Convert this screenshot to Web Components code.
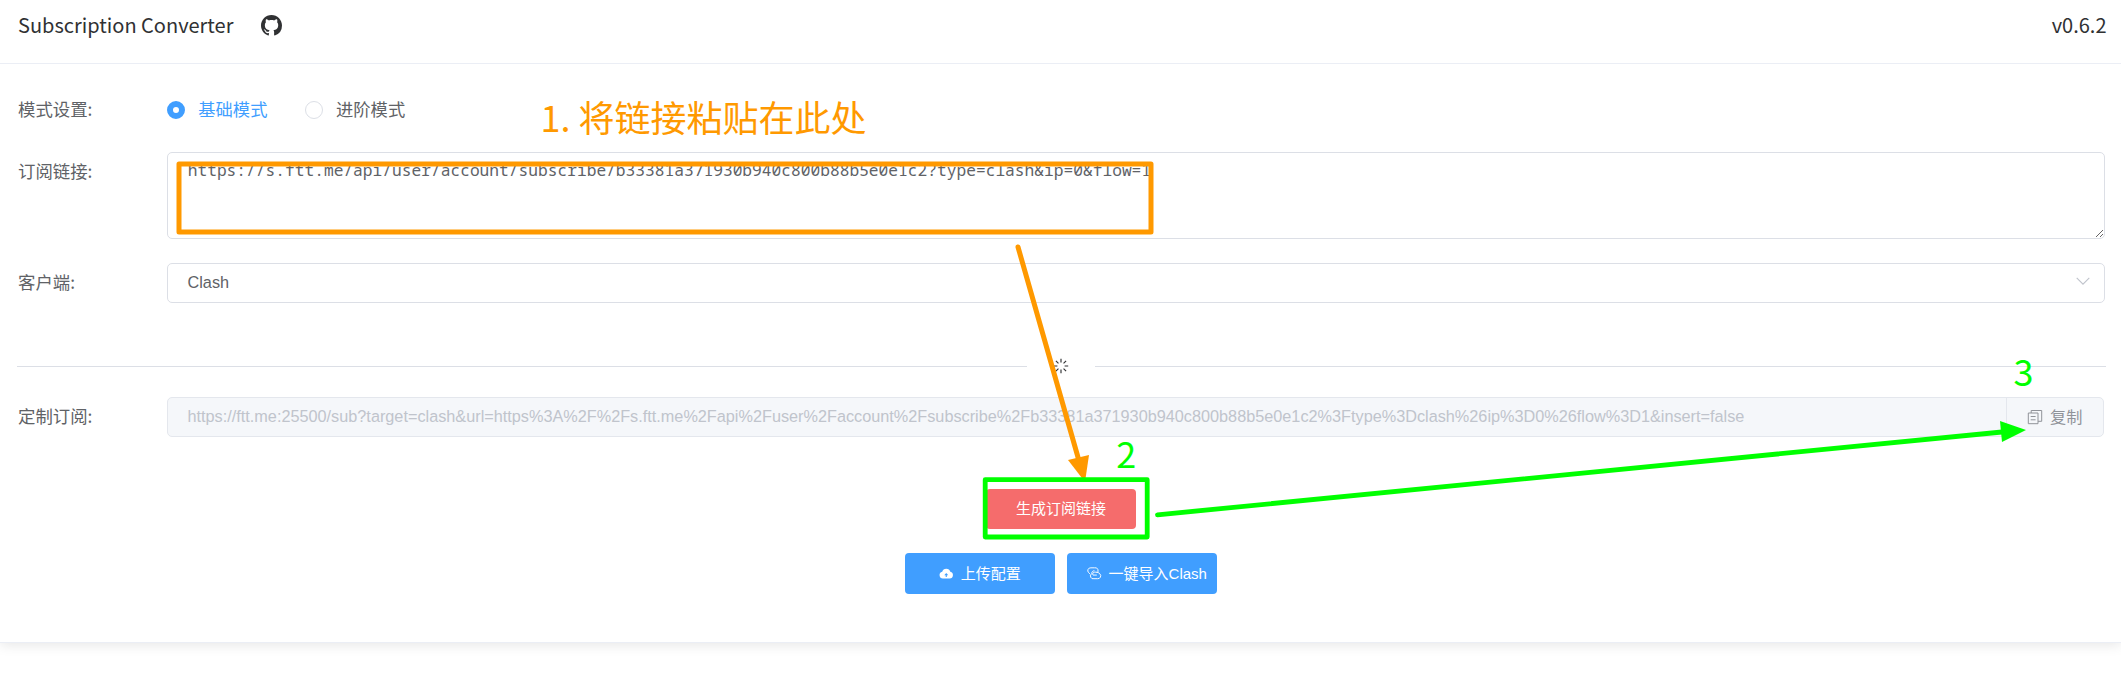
<!DOCTYPE html>
<html lang="zh-CN">
<head>
<meta charset="utf-8">
<title>Subscription Converter</title>
<style>
body{margin:0;background:#fff;font-family:"Noto Sans CJK SC",sans-serif;color:#606266;height:675px;overflow:hidden}
</style>
</head>
<body>
<converter-page></converter-page>
<script>
const define=(name,html,setup)=>customElements.define(name,class extends HTMLElement{
  constructor(){super();this.attachShadow({mode:'open'}).innerHTML=html;}
  connectedCallback(){if(setup)setup(this,this.shadowRoot);}
});

const icons={
  github:'<path fill="currentColor" d="M8 0C3.58 0 0 3.58 0 8c0 3.54 2.29 6.53 5.47 7.59.4.07.55-.17.55-.38 0-.19-.01-.82-.01-1.49-2.01.37-2.53-.49-2.69-.94-.09-.23-.48-.94-.82-1.13-.28-.15-.68-.52-.01-.53.63-.01 1.08.58 1.23.82.72 1.21 1.87.87 2.33.66.07-.52.28-.87.51-1.07-1.78-.2-3.64-.89-3.64-3.95 0-.87.31-1.59.82-2.15-.08-.2-.36-1.02.08-2.12 0 0 .67-.21 2.2.82.64-.18 1.32-.27 2-.27s1.36.09 2 .27c1.53-1.04 2.2-.82 2.2-.82.44 1.1.16 1.92.08 2.12.51.56.82 1.27.82 2.15 0 3.07-1.87 3.75-3.65 3.95.29.25.54.73.54 1.48 0 1.07-.01 1.93-.01 2.2 0 .21.15.46.55.38A8.01 8.01 0 0 0 16 8c0-4.42-3.58-8-8-8z"/>',
  down:'<path d="M1.7 4.8 8 11.1 14.300 4.800" fill="none" stroke="currentColor" stroke-width="1.15"/>',
  loading:'<path d="M8 .8v3.600M8 11.600v3.600M.8 8h3.600M11.600 8h3.600M2.900 2.900l2.550 2.550M10.550 10.550l2.550 2.550M2.900 13.100l2.550-2.550M10.550 5.450l2.550-2.550" stroke="currentColor" stroke-width="1.150" fill="none"/>',
  copy:'<path d="M1.300 4h9.700v10.700H1.300zM4.200 4V1.500h10.500v10.800H11M3.700 7.500h4.900M3.700 10.800h4.900" stroke="currentColor" stroke-width="1" fill="none"/>',
  upload:'<path fill="currentColor" fill-rule="evenodd" d="M4.200 13.700A3.700 3.700 0 0 1 3.500 6.400 4.700 4.700 0 0 1 12.500 6.400 3.700 3.700 0 0 1 11.800 13.700ZM7.400 12V10.200H5.800L8 7.700l2.200 2.500H8.600V12Z"/>',
  link:'<path d="M10.800 7.600A3.100 3.100 0 0 0 8.300 2H4.300a3.100 3.100 0 0 0-2.600 5.200L3.300 8.700M5.200 8.400A3.100 3.100 0 0 0 7.700 14h4a3.100 3.100 0 0 0 2.600-5.200c-1-1.400-2.600-2-4.600-2H8.200a2 2 0 0 0-1.500 3.200h4.100M5.200 8.400c0-2 1.200-3.100 3-3.200" stroke="currentColor" stroke-width="1.050" fill="none"/>'
};
define('ui-icon','<style>:host{display:inline-flex;width:16px;height:16px;flex:none}svg{width:100%;height:100%}</style><svg viewBox="0 0 16 16"></svg>',
  (h,r)=>{r.querySelector('svg').innerHTML=icons[h.getAttribute('name')];});

define('page-header',`<style>
:host{display:flex;box-sizing:border-box;height:64px;border-bottom:1px solid #ebeef5;padding:0 14.500px 12px 18px;align-items:center;color:#303133;font-size:20px;line-height:30px}
ui-icon{width:21px;height:21px;margin-left:28px}
.v{margin-left:auto}
.t,.v{margin-top:-1px}
</style><span class="t"><slot></slot></span><ui-icon name="github"></ui-icon><span class="v"><slot name="version"></slot></span>`);

define('form-row',`<style>
:host{display:grid;grid-template-columns:149px 1fr;align-items:start;padding:0 16px 0 18px}
.l{font-size:17.400px;line-height:38px;height:38px;white-space:nowrap}
</style><div class="l"></div><slot></slot>`,(h,r)=>{r.querySelector('.l').textContent=h.getAttribute('label');});

define('radio-option',`<style>
:host{display:flex;align-items:center;font-size:17.300px;height:40px}
i{box-sizing:border-box;width:18px;height:18px;border-radius:50%;border:1px solid #dcdfe6;margin-right:13px}
span{line-height:38px;height:40px}
:host([checked]){color:#409eff}
:host([checked]) i{border:6.300px solid #409eff;background:#fff}
</style><i></i><span><slot></slot></span>`);
define('radio-group','<style>:host{display:flex;gap:37.600px;padding-left:.3px}</style><slot></slot>');

define('text-area',`<style>
:host{display:block}
textarea{display:block;box-sizing:border-box;width:100%;height:87px;border:1px solid #dcdfe6;border-radius:5px;padding:5px 20px 5px 19.700px;resize:vertical;outline:0;font:16.230px/24px "Noto Sans Mono","DejaVu Sans Mono",monospace;color:#606266;background:#fff;overflow:hidden;white-space:pre}
</style><textarea spellcheck="false"></textarea>`,(h,r)=>{r.querySelector('textarea').value=h.getAttribute('value');});

define('select-box',`<style>
:host{display:flex;box-sizing:border-box;height:40px;border:1px solid #dcdfe6;border-radius:5px;padding:0 13px 2px 19.500px;align-items:center;justify-content:space-between;font:16.250px "Liberation Sans",sans-serif}
ui-icon{color:#c0c4cc;margin-top:-2px}
</style><span><slot></slot></span><ui-icon name="down"></ui-icon>`);

define('section-divider',`<style>
:host{display:flex;align-items:center;margin:0 15.500px 0 17px;height:16px;color:#303133}
i{height:1px;background:#dcdfe6;flex:1}
span{width:68px;display:flex;justify-content:center}
ui-icon{margin-top:-1px}
</style><i></i><span><ui-icon name="loading"></ui-icon></span><i></i>`);

define('copy-input',`<style>
:host{display:flex;box-sizing:border-box;height:40px;border:1px solid #e4e7ed;border-radius:5px;background:#f5f7fa;align-items:stretch;margin-right:1px}
.t{flex:1;padding-left:19.500px;font:16.265px/37px "Liberation Sans",sans-serif;color:#c0c4cc;white-space:nowrap}
.b{box-sizing:border-box;width:97.500px;border-left:1px solid #e4e7ed;display:flex;align-items:center;padding-left:20.500px;gap:7px;color:#909399;font-size:16.200px}
.b span{line-height:20px;margin-top:-2px}
.b ui-icon{margin-top:-1px}
</style><div class="t"><slot></slot></div><div class="b"><ui-icon name="copy"></ui-icon><span><slot name="action"></slot></span></div>`);

define('ui-button',`<style>
:host{display:flex;box-sizing:border-box;width:150px;height:41px;border-radius:4px;background:#409eff;color:#fff;align-items:center;justify-content:center;gap:7px;white-space:nowrap;font:15px/20px "Liberation Sans","Noto Sans CJK SC",sans-serif;padding-left:1px}
:host([kind=danger]){background:#f56c6c;height:40px}
:host([wide]){padding-left:11px}
::slotted(ui-icon){width:14.500px;height:14.500px}
</style><slot name="icon"></slot><span><slot></slot></span>`);
define('button-row','<style>:host{display:flex;justify-content:center;gap:12px}</style><slot></slot>');

define('annotation-layer',`<style>
:host{position:absolute;left:0;top:0;pointer-events:none}
svg{display:block}
text{font:36px "Noto Sans CJK SC",sans-serif}
</style><svg width="2121" height="675" viewBox="0 0 2121 675" fill="none">
<g stroke="#f90" stroke-linejoin="round" stroke-linecap="round"><rect x="179" y="164" width="972" height="68" stroke-width="5"/><path d="M1018 247 1078.500 459" stroke-width="5"/></g>
<path d="M1068 460 1089 455 1085 482Z" fill="#f90"/>
<g stroke="#0f0" stroke-linejoin="round" stroke-linecap="round" stroke-width="4.800"><rect x="985.200" y="479.700" width="162" height="57.300"/><path d="M1157.500 514.800 2002 432"/></g>
<path d="M2000 421 2026 430 2002 442Z" fill="#0f0"/>
<text x="540.500" y="132" fill="#f90">1. 将链接粘贴在此处</text>
<text x="1116.300" y="468" fill="#0f0">2</text><text x="2013.500" y="386" fill="#0f0">3</text>
</svg>`);

define('converter-page',`<style>
:host{display:block;position:relative}
main{display:flex;flex-direction:column;box-sizing:border-box;height:643px;background:#fff;box-shadow:0 2px 12px rgba(0,0,0,.1);border-bottom:1px solid #ebeef5}
.mode{margin-top:26px}
.link{margin-top:22px}
.client{margin-top:24px}
section-divider{margin-top:55px}
.result{margin-top:23px}
.go{margin-top:52px}
.more{margin-top:24px}
</style><main>
<page-header>Subscription Converter<span slot="version">v0.6.2</span></page-header>
<form-row class="mode" label="模式设置:"><radio-group><radio-option checked>基础模式</radio-option><radio-option>进阶模式</radio-option></radio-group></form-row>
<form-row class="link" label="订阅链接:"><text-area value="https://s.ftt.me/api/user/account/subscribe/b33381a371930b940c800b88b5e0e1c2?type=clash&amp;ip=0&amp;flow=1"></text-area></form-row>
<form-row class="client" label="客户端:"><select-box>Clash</select-box></form-row>
<section-divider></section-divider>
<form-row class="result" label="定制订阅:"><copy-input>https://ftt.me:25500/sub?target=clash&amp;url=https%3A%2F%2Fs.ftt.me%2Fapi%2Fuser%2Faccount%2Fsubscribe%2Fb33381a371930b940c800b88b5e0e1c2%3Ftype%3Dclash%26ip%3D0%26flow%3D1&amp;insert=false<span slot="action">复制</span></copy-input></form-row>
<button-row class="go"><ui-button kind="danger">生成订阅链接</ui-button></button-row>
<button-row class="more"><ui-button><ui-icon slot="icon" name="upload"></ui-icon>上传配置</ui-button><ui-button wide><ui-icon slot="icon" name="link"></ui-icon>一键导入Clash</ui-button></button-row>
</main><annotation-layer></annotation-layer>`);
</script>
</body>
</html>
